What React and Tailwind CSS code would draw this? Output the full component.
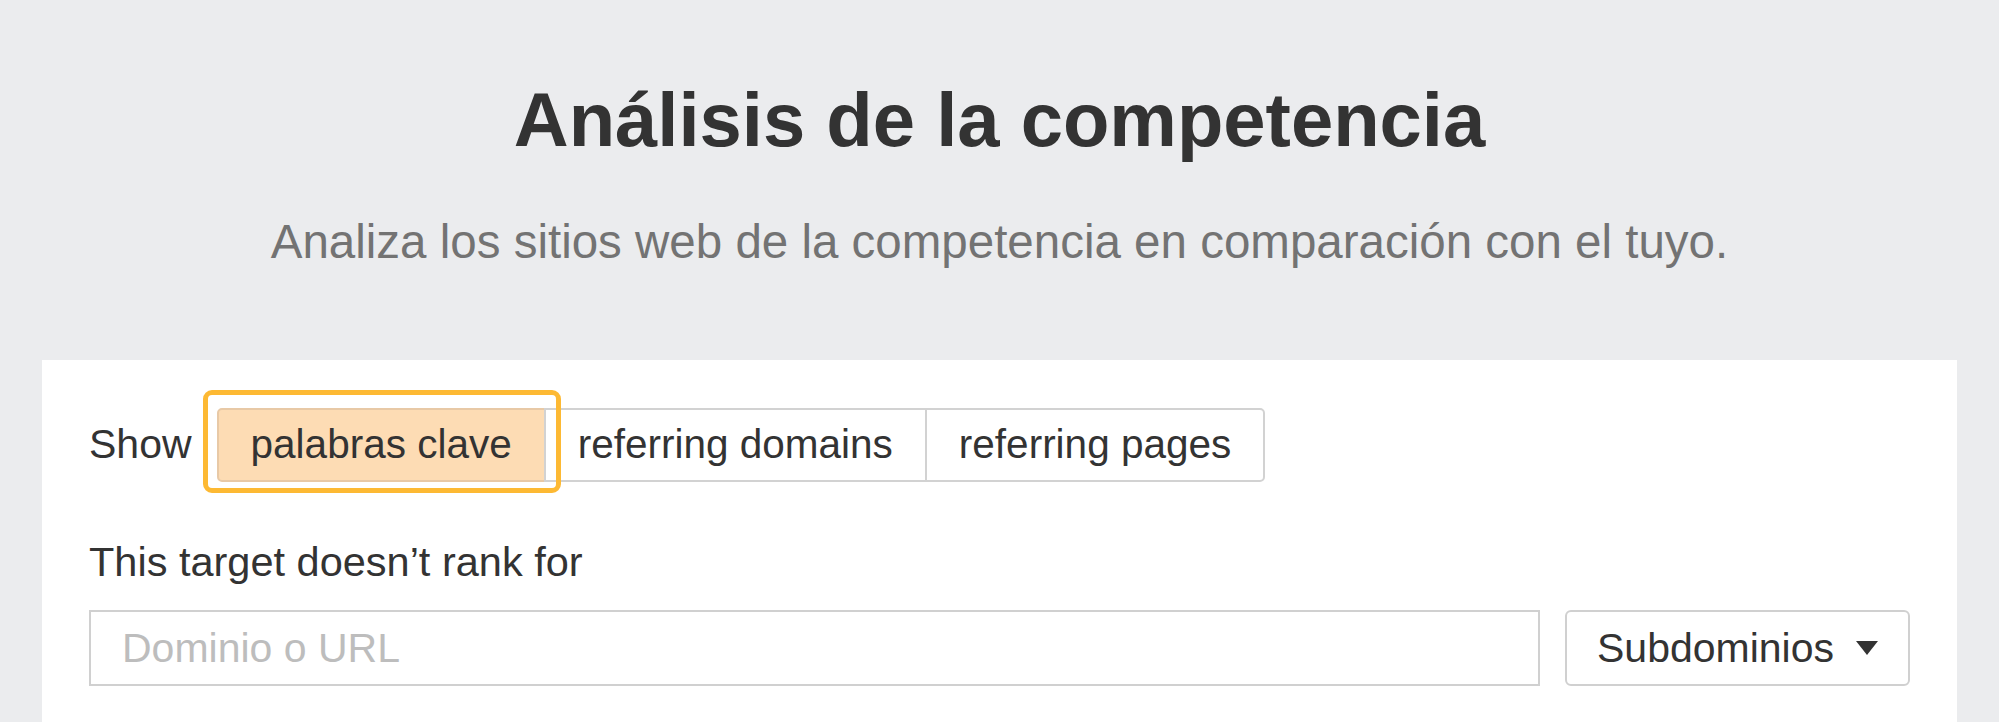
export default function App() {
  //Tabs
  const tabs = ["palabras clave", "referring domains", "referring pages"];

  return (
    <div className="min-h-screen overflow-hidden bg-[#ebecee] pt-[82px] font-['Liberation_Sans',Arial,sans-serif] text-[#333]">
      <h1 className="text-center text-[76px] leading-none font-bold text-[#333]">
        Análisis de la competencia
      </h1>
      <p className="mt-[60px] text-center text-[47.5px] leading-none text-[#737373]">
        Analiza los sitios web de la competencia en comparación con el tuyo.
      </p>

      <div className="mx-[42px] mt-[94px] bg-white px-[47px] pt-[48px] pb-[80px]">
        {/* Show toggles */}
        <div className="flex items-center">
          <span className="mr-[25px] text-[41px] leading-none">Show</span>
          <div className="relative flex h-[74px]">
            {tabs.map((tab, i) => (
              <button
                key={tab}
                className={`flex items-center border-2 px-[32px] text-[40.5px] leading-none text-[#333] ${
                  i === 0
                    ? "rounded-l-[5px] border-[#e8c9a6] bg-[#fddcb4]"
                    : "-ml-[2px] border-[#d2d2d2] bg-white"
                } ${i === tabs.length - 1 ? "rounded-r-[5px]" : ""}`}
              >
                {tab}
              </button>
            ))}
            <div className="pointer-events-none absolute -top-[18px] -left-[14px] h-[103px] w-[358px] rounded-[9px] border-[5px] border-[#fdb933]"></div>
          </div>
        </div>

        <div className="mt-[59px] text-[41.5px] leading-none">
          This target doesn’t rank for
        </div>

        {/* Target input */}
        <div className="mt-[28px] flex gap-[25px]">
          <input
            className="h-[76px] flex-1 border-2 border-[#d0d0d0] px-[31px] text-[41px] text-[#333] outline-none placeholder:text-[#bdbdbd]"
            placeholder="Dominio o URL"
          />
          <button className="flex h-[76px] w-[345px] items-center justify-between rounded-[6px] border-2 border-[#d0d0d0] bg-white px-[30px] text-[41px] leading-none text-[#333]">
            Subdominios
            <svg width="22" height="14" viewBox="0 0 22 14">
              <polygon points="0,0 22,0 11,14" fill="#333" />
            </svg>
          </button>
        </div>
      </div>
    </div>
  );
}
